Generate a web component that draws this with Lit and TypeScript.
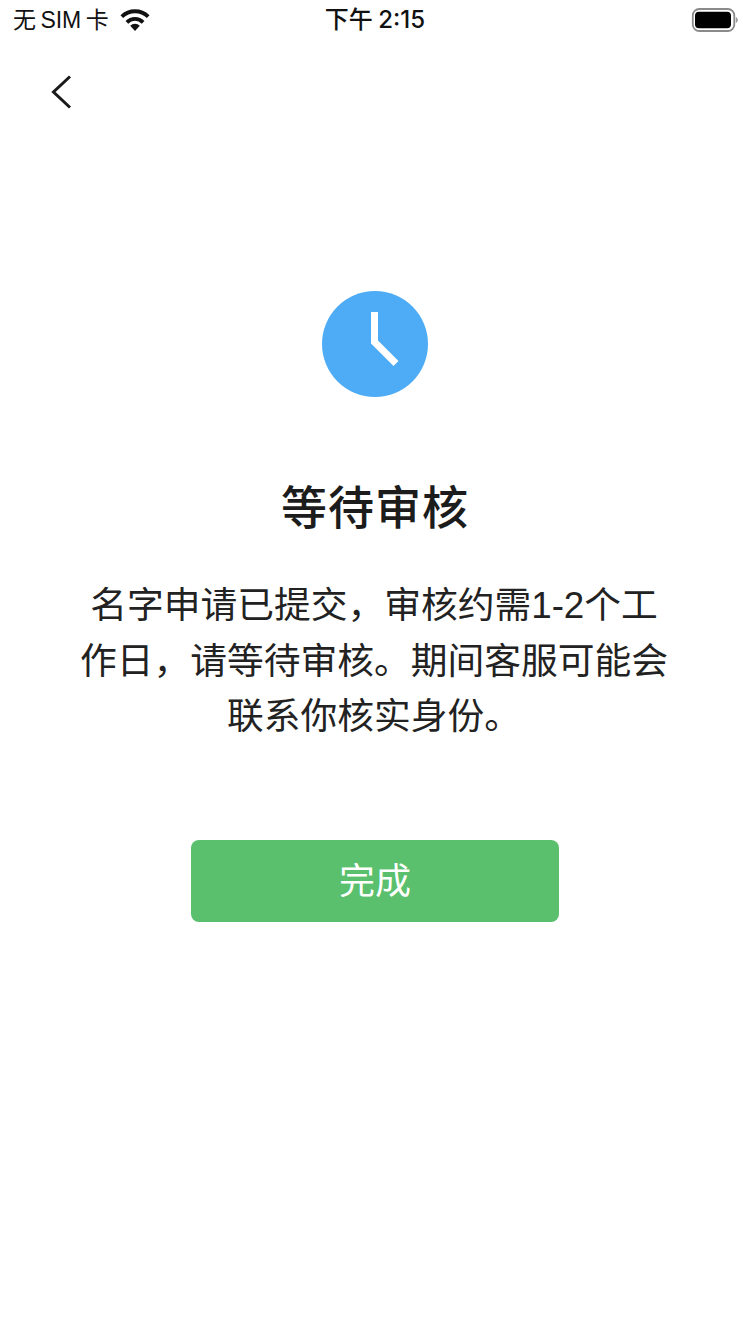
import { LitElement, html, css } from "lit";
import { customElement } from "lit/decorators.js";

@customElement("app-root")
export class AppRoot extends LitElement {
  static styles = css`
    :host {
      display: block;
      width: 750px;
      height: 1334px;
      background: #fff;
      font-family: "Noto Sans CJK SC", "Liberation Sans", sans-serif;
      color: #1a1a1a;
      overflow: hidden;
    }
    .status {
      height: 40px;
      display: grid;
      grid-template-columns: 1fr auto 1fr;
      align-items: center;
      padding: 0 10px 0 13px;
      color: #111;
    }
    .left { display: flex; align-items: center; gap: 11px; }
    .carrier {
      font-family: "Liberation Sans", "Noto Sans CJK SC", sans-serif;
      font-size: 23px;
      line-height: 40px;
      word-spacing: -2px;
      white-space: nowrap;
    }
    .time {
      font-family: "Inter", "Noto Sans CJK SC", sans-serif;
      font-size: 24px;
      line-height: 40px;
      font-weight: 500;
      word-spacing: -1px;
      white-space: nowrap;
      margin-right: 3px;
    }
    .right { display: flex; justify-content: flex-end; }
    .nav { height: 102px; padding-left: 50px; display: flex; align-items: flex-start; padding-top: 34px; box-sizing: border-box; }
    .nav svg { display: block; }
    .main {
      display: flex;
      flex-direction: column;
      align-items: center;
      padding-top: 149px;
    }
    .clock { display: block; }
    .title {
      margin: 73px 0 0;
      font-size: 46px;
      line-height: 68px;
      font-weight: 500;
      letter-spacing: 1px;
      color: #1c1c1c;
    }
    .desc {
      margin: 40px 2px 0 0;
      width: 600px;
      font-family: "Liberation Sans", "Noto Sans CJK SC", sans-serif;
      font-size: 36.75px;
      line-height: 55.5px;
      text-align: center;
      color: #222;
      font-weight: 400;
    }
    .btn {
      margin-top: 95px;
      width: 368px;
      height: 82px;
      border: 0;
      border-radius: 8px;
      background: #5ac06d;
      color: #fff;
      font: inherit;
      font-size: 36px;
      padding: 0 0 5px;
      display: flex;
      align-items: center;
      justify-content: center;
    }
  `;

  render() {
    return html`
      <div class="status">
        <div class="left">
          <span class="carrier">无 SIM 卡</span>
          <svg width="30" height="24" viewBox="0 0 30 24">
            <path d="M15 23 10.200 17.800a6.800 6.800 0 0 1 9.600 0Z" fill="#111"/>
            <path d="M6.900 14.300a11.500 11.500 0 0 1 16.200 0" fill="none" stroke="#111" stroke-width="3.800"/>
            <path d="M1.800 8.600a19 19 0 0 1 26.400 0" fill="none" stroke="#111" stroke-width="3.800"/>
          </svg>
        </div>
        <span class="time">下午 2:15</span>
        <div class="right">
          <svg width="50" height="24" viewBox="0 0 50 24">
            <rect x="2.800" y="1" width="41.500" height="22" rx="6.500" fill="none" stroke="#8a8a8a" stroke-width="1.800"/>
            <rect x="5" y="3.700" width="36" height="16.600" rx="4" fill="#000"/>
            <path d="M45.800 9v6c1.200-.4 2-1.600 2-3s-.8-2.600-2-3Z" fill="#9a9a9a"/>
          </svg>
        </div>
      </div>
      <div class="nav">
        <svg width="24" height="36" viewBox="0 0 24 36">
          <path d="M20 2.500 3.500 18 20 33.500" fill="none" stroke="#1a1a1a" stroke-width="3"/>
        </svg>
      </div>
      <div class="main">
        <svg class="clock" width="106" height="106" viewBox="0 0 106 106">
          <circle cx="53" cy="53" r="53" fill="#4eacf6"/>
          <path d="M52.500 21V51L74 72.500" fill="none" stroke="#fff" stroke-width="7"/>
        </svg>
        <h1 class="title">等待审核</h1>
        <p class="desc">名字申请已提交，审核约需1-2个工作日，请等待审核。期间客服可能会联系你核实身份。</p>
        <button class="btn">完成</button>
      </div>
    `;
  }
}
